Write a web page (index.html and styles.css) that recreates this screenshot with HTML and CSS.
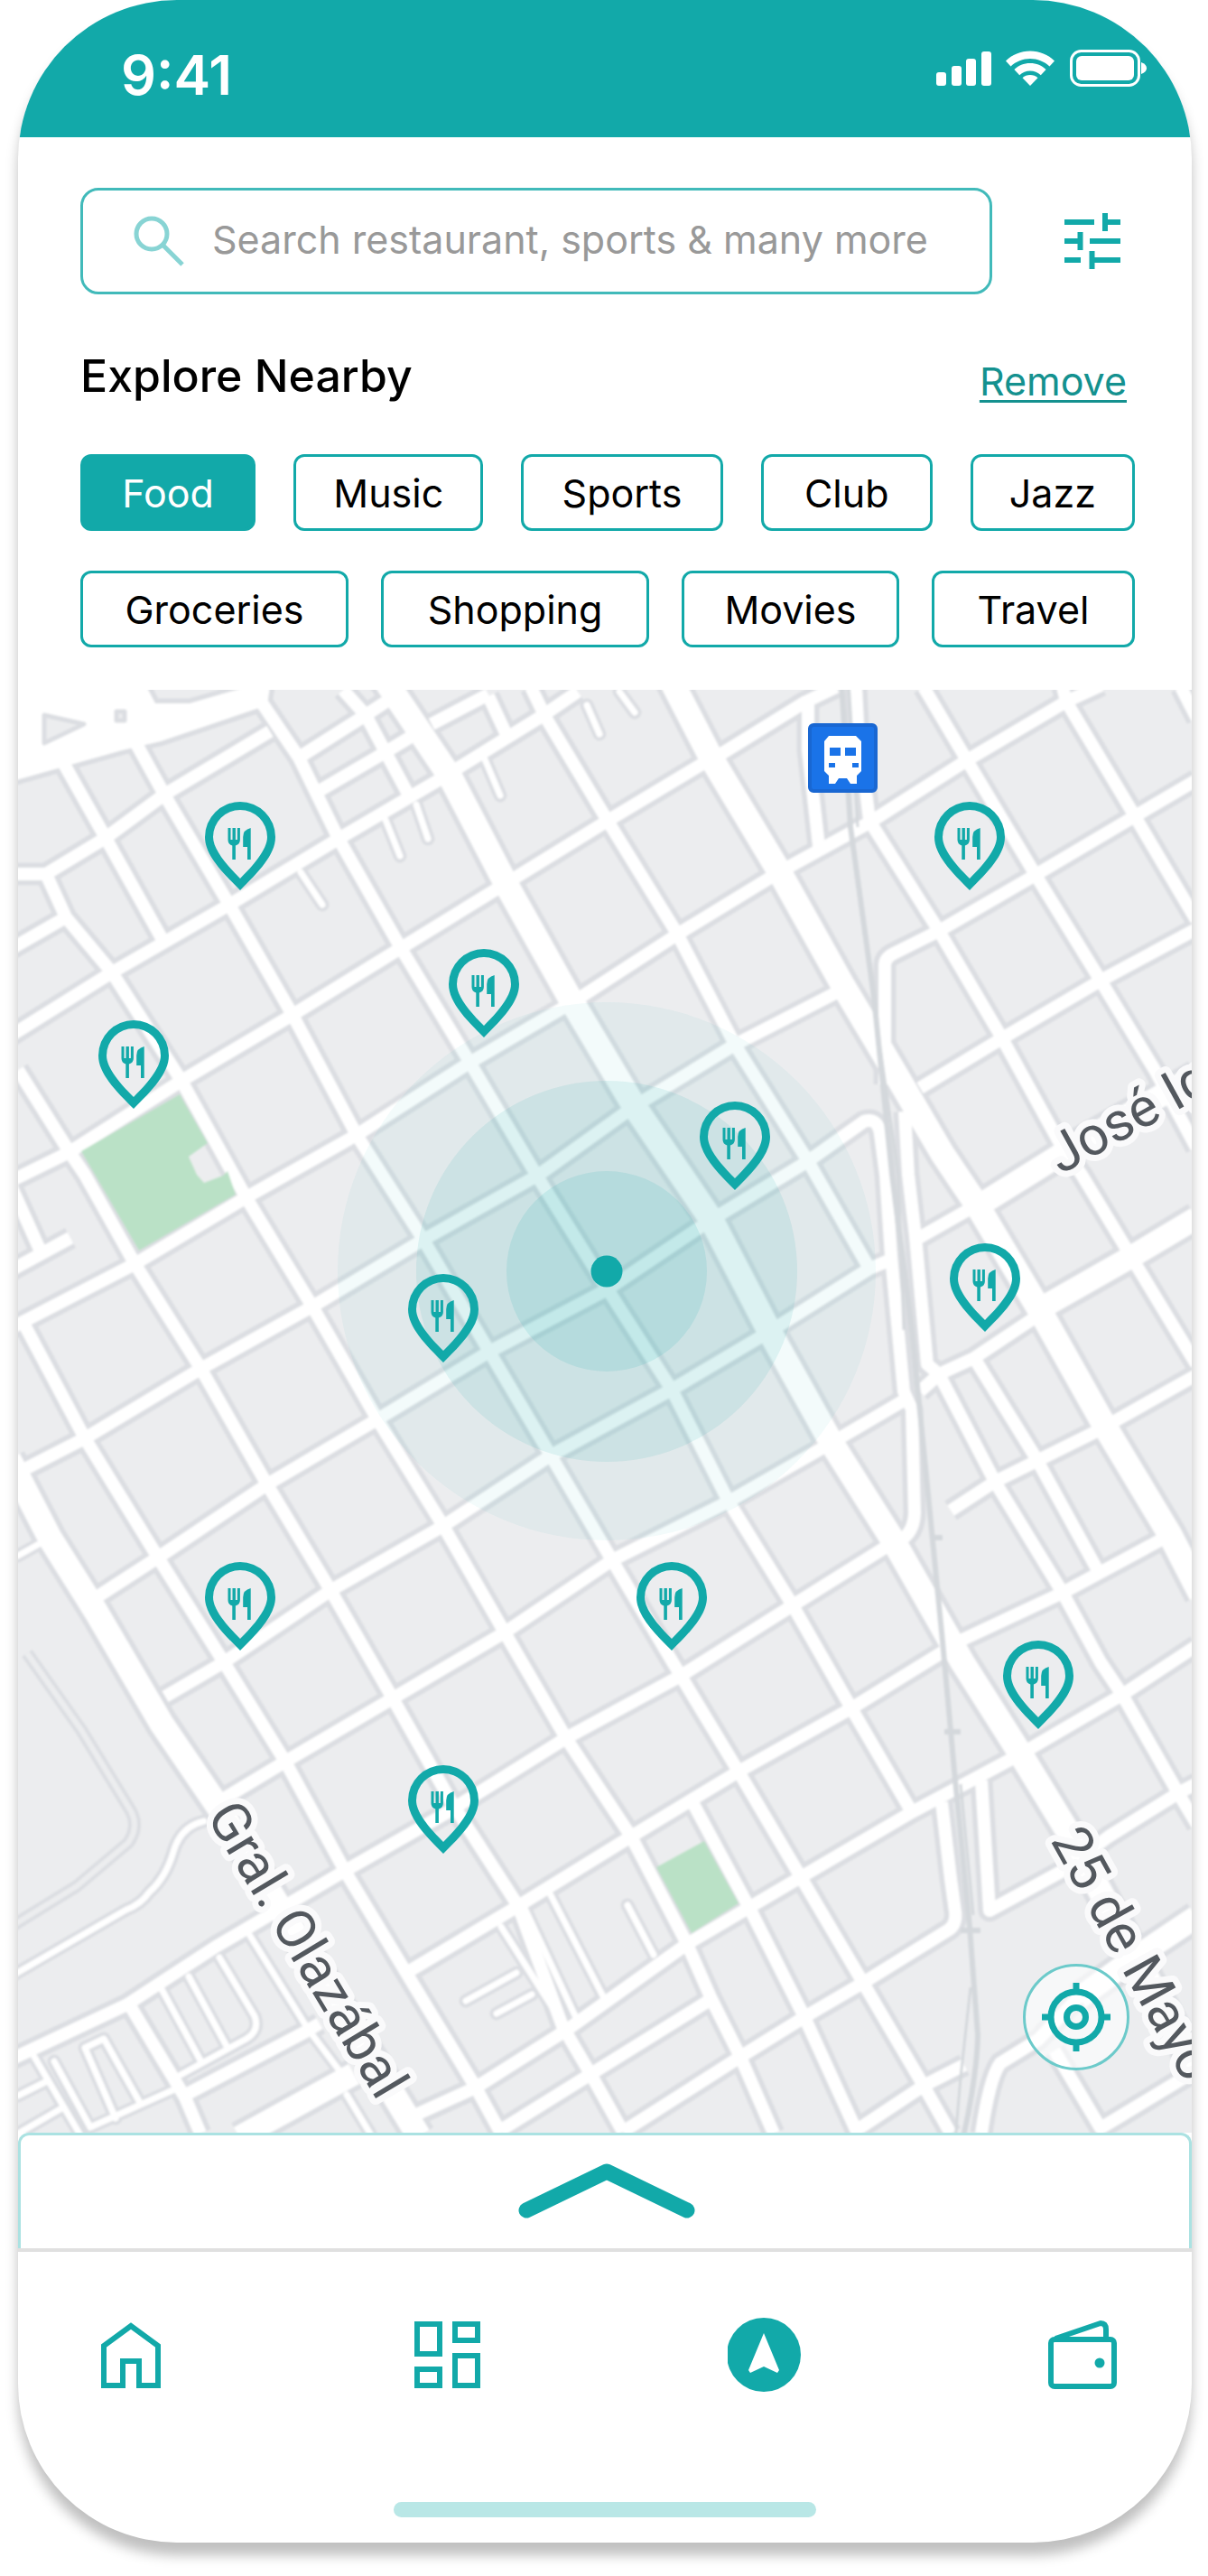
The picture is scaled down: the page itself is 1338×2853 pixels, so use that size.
FILE: index.html
```html
<!DOCTYPE html>
<html lang="en">
<head>
<meta charset="utf-8">
<meta name="viewport" content="width=device-width, initial-scale=1">
<title>Explore Nearby</title>
<link rel="stylesheet" href="styles.css">
</head>
<body>
<main class="phone">
  <header class="status">
    <span class="status-time">9:41</span>
    <svg class="status-icons" viewBox="1036 54 236 44" aria-hidden="true">
      <g fill="#fff">
        <rect x="1037" y="80" width="11" height="15" rx="3"/>
        <rect x="1054" y="73" width="11" height="22" rx="3"/>
        <rect x="1070" y="65" width="11" height="30" rx="3"/>
        <rect x="1087" y="57" width="11" height="38" rx="3"/>
        <path d="M1141 56.500c10.500 0 20 4 27 11l-5.500 6c-6-5.500-13.500-8.500-21.500-8.500s-15.500 3-21.500 8.500l-5.500-6c7-7 16.500-11 27-11z"/>
        <path d="M1141 70c7 0 13 2.600 17.600 7l-5.800 6.200c-3.200-3-7.300-4.700-11.800-4.700s-8.600 1.700-11.800 4.700l-5.800-6.200c4.600-4.400 10.600-7 17.600-7z"/>
        <path d="M1141 83c3.300 0 6.200 1.200 8.500 3.200l-8.500 8.800-8.500-8.800c2.300-2 5.200-3.200 8.500-3.200z"/>
        <rect x="1192" y="62" width="64" height="27" rx="6"/>
        <path d="M1264 69c4 1.500 6 3.700 6 6.500s-2 5-6 6.500z"/>
      </g>
      <rect x="1186.500" y="56.500" width="75" height="38" rx="11" fill="none" stroke="#fff" stroke-width="3"/>
    </svg>
  </header>

  <section class="explore">
    <div class="search-row">
      <label class="search">
        <svg class="search-icon" viewBox="0 0 56 56" aria-hidden="true"><circle cx="20" cy="20" r="17" fill="none" stroke="#88d4d4" stroke-width="5"/><path d="M32 32L54 54" stroke="#88d4d4" stroke-width="5"/></svg>
        <input class="search-input" type="search" aria-label="Search" placeholder="Search restaurant, sports &amp; many more">
      </label>
      <button class="filter" type="button" aria-label="Filters">
        <svg viewBox="1176 234 66 66" fill="none" stroke="#12a9a9" stroke-width="6"><path d="M1178 246h33M1223 246h17M1223 236v20M1178 267h18M1206 267h34M1195.500 257v20M1178 288h18M1208 288h32M1208.500 278v20"/></svg>
      </button>
    </div>
    <div class="title-row">
      <h1 class="title">Explore Nearby</h1>
      <a class="remove" href="#">Remove</a>
    </div>
    <div class="chips chips-five">
      <button class="chip chip-active" type="button">Food</button>
      <button class="chip" type="button">Music</button>
      <button class="chip" type="button">Sports</button>
      <button class="chip" type="button">Club</button>
      <button class="chip" type="button">Jazz</button>
    </div>
    <div class="chips chips-four">
      <button class="chip" type="button">Groceries</button>
      <button class="chip" type="button">Shopping</button>
      <button class="chip" type="button">Movies</button>
      <button class="chip" type="button">Travel</button>
    </div>
  </section>

  <section class="map" aria-label="Map">
    <svg class="map-canvas" viewBox="20 763 1300 1598">
      <defs>
        <g id="streets">
          <path d="M20 1184L77 1275 94 1300 149 1398 222 1514 294 1640 366 1760 435 1880 500 1995 574 2110 623 2243 657 2301 690 2360"/>
          <path d="M51 967L73 1015 124 1076 201 1196 273 1326 346 1446 418 1571 491 1689 559 1807 627 1924 699 2033 761 2152 788 2213 820 2277 857 2362"/>
          <path d="M68 840L117 927 179 1038"/>
          <path d="M145 812L182 879 254 1001 324 1123 395 1256 469 1372 542 1496 610 1611 678 1727 754 1855 818 1961 887 2078 956 2195 1023 2309 1053 2362"/>
          <path d="M285 770L331 838 375 928 444 1049 520 1175 594 1300 673 1427 744 1538 807 1662 878 1777 943 1891 1010 2006"/>
          <path d="M380 763L405 791 427 832 455 884"/>
          <path d="M541 770L562 815M588 760L604 793 673 908 750 1033 814 1156 895 1285 963 1404"/>
          <path d="M895 770V830L908 945M948 760L950 800 963 908 1040 1030 1110 1149 1177 1271 1198 1300 1253 1391 1325 1510"/>
          <path d="M1023 760L1071 841 1147 968 1219 1085 1279 1184 1325 1270M1177 760L1181 776 1257 903 1325 1018M1308 760L1326 795"/>
          <path d="M1040 1521L1102 1640 1177 1763 1219 1840 1243 1876 1305 1985 1326 2020M1079 1503L1147 1613 1219 1744"/>
          <path d="M28 1468L94 1592 175 1724 248 1840 316 1950 382 2071 450 2184 527 2311 555 2362"/>
          <path d="M12 1470L149 1399 273 1325 395 1256 520 1176 636 1108 750 1034 863 965 963 910 1071 841 1181 776 1220 758"/>
          <path d="M12 1634L94 1592 224 1514 346 1446 469 1372 597 1300 703 1224 814 1156 925 1099"/>
          <path d="M107 1768L175 1724 296 1643 418 1571 542 1496 673 1427 783 1353 895 1285 957 1241Q972 1236 975 1255L981 1300 987 1390 1001 1540 1010 1560 1013 1675Q1012 1698 995 1706"/>
          <path d="M183 1878L248 1840 367 1760 491 1689 610 1611 744 1538 852 1474 963 1404 987 1394M1016 1371L1074 1338"/>
          <path d="M243 1994L316 1950 435 1880 559 1807 678 1727 807 1662 921 1597 1008 1546M1019 1540L1040 1521 1079 1503 1151 1455"/>
          <path d="M12 2280L141 2219 239 2155 307 2115 382 2071 491 2009 627 1924 754 1855 878 1777 985 1710"/>
          <path d="M450 2184L574 2110 699 2033 818 1961 943 1891 1050 1825"/>
          <path d="M461 2341L527 2311 628 2247 761 2152 887 2078 1010 2006 1130 1942 1243 1876 1325 1822"/>
          <path d="M555 2358L669 2287 788 2213M690 2360L820 2277 891 2233 956 2195 1048 2138Q1060 2132 1058 2116L1053 2080 1043 1995"/>
          <path d="M946 2360L1023 2309 1068 2286M767 1995L831 2114 891 2233 950 2362"/>
          <path d="M1087 1971L1096 2115 1177 2071 1228 2033 1305 1985 1326 1974"/>
          <path d="M1200 2205L1150 2258 1108 2284Q1096 2300 1087 2362M1168 2270L1219 2356 1325 2292"/>
          <path d="M1224 1579L1325 1522M1053 1672L1102 1640 1219 1582M1066 1815L1177 1763 1294 1700"/>
          <path d="M788 839L673 908 561 977 444 1049 324 1123 201 1196 77 1275 12 1307M794 837L891 777 926 760"/>
          <path d="M12 1146L124 1076 254 1001 375 928 484 864 602 791 640 765"/>
          <path d="M12 967H51L117 927 182 879 299 809M331 838L405 791 440 768M350 877L427 832 460 812M478 801L541 768M12 1050L73 1015"/>
          <path d="M980 1200V1068Q980 1060 990 1055L1040 1030 1147 968 1257 903 1325 863M1019 1204L1110 1149 1219 1085 1325 1028M1002 1230L1006 1300 1014 1369 1027 1510 1040 1521"/>
          <path d="M12 1312L45 1385M12 1406L78 1370M200 2322L337 2250 354 2240M145 2222L205 2322 222 2362"/>
        </g>
        <g id="lanes">
          <path d="M427 907L443 947M461 890L474 928M537 840L554 880M333 965L357 1001M650 780L664 812M686 765L703 788"/>
          <path d="M226 2016Q200 2022 192 2050T165 2095Q156 2108 140 2114L12 2188"/>
          <path d="M243 2167L282 2232Q288 2248 273 2257L200 2297M209 2188L252 2267M179 2202L222 2281M38 2277L88 2362M60 2282L100 2355M94 2267L115 2257 154 2326M94 2267L128 2345M20 2362L70 2333M100 2355L200 2310M20 2320L50 2305M277 2143L341 2246 375 2291M384 2319L410 2362"/>
          <path d="M555 2133L627 2246M580 2110L640 2238M610 2098L669 2212M516 2215L572 2184M550 2229L589 2208M695 2109L724 2164M20 1722L45 1708"/>
        </g>
        <g id="avenues">
          <path d="M425 750L499 860 561 979 631 1104 703 1225 788 1350 852 1473 921 1597 991 1708 1066 1840 1130 1941 1183 2028 1325 2290"/>
          <path d="M742 750L788 839 863 964 934 1091 993 1190 1044 1277 1083 1335 1151 1449 1224 1579 1296 1699 1330 1765"/>
          <path d="M10 1615L55 1702 107 1785 179 1908 245 2005 345 2170 464 2365"/>
        </g>
        <g id="boulevards">
          <path d="M1083 1335L1200 1262 1325 1190M1151 1449L1253 1391 1325 1348M265 2366L392 2296M1325 2122L1250 2172 1195 2212"/>
        </g>
        <path id="junction" d="M0 740H152L172 778H210L300 752 296 780 178 820 135 830 0 868z"/>
        <g id="pin" fill="#12a9a9">
          <path fill-rule="evenodd" d="M0 0C-20-20-39-39-39-59A39 39 0 0 1 39-59C39-39 20-20 0 0zM0-13C14-27 30-45 30-59A30 30 0 0 0-30-59C-30-45-14-27 0-13z"/>
          <path d="M-13.500-69h3v13h2v-13h3.400v13h2v-13h3v13q0 5-5 6.500V-34h-3.600v-15.500q-4.800-1.500-4.800-6.500zM11.700-69V-34H8V-48H3.200v-11q0-8 8.500-10z"/>
        </g>
        <filter id="soften" x="0" y="0" width="1" height="1"><feGaussianBlur stdDeviation="1.300"/></filter>
      </defs>
      <rect x="20" y="763" width="1300" height="1598" fill="#ecedef"/>
      <g filter="url(#soften)" fill="none" stroke-linejoin="round">
        <rect x="20" y="763" width="1300" height="1598" fill="#ecedef"/>
        <g stroke="#dcdee2">
          <use href="#lanes" stroke-width="15" stroke-linecap="round"/>
          <use href="#streets" stroke-width="25"/>
          <use href="#boulevards" stroke-width="36"/>
          <use href="#avenues" stroke-width="38"/>
          <use href="#junction" stroke-width="11"/>
          <path stroke-width="14" d="M30 1830L90 1915 142 2000Q156 2020 142 2040L85 2088 12 2133"/>
        </g>
        <g stroke="#fff">
          <use href="#lanes" stroke-width="7" stroke-linecap="round"/>
          <use href="#streets" stroke-width="14"/>
          <use href="#boulevards" stroke-width="25"/>
          <use href="#avenues" stroke-width="27"/>
        </g>
        <use href="#junction" fill="#fff"/>
        <path stroke="#ecedef" stroke-width="6" d="M30 1830L90 1915 142 2000Q156 2020 142 2040L85 2088 12 2133"/>
        <path fill="#ecedef" stroke="#dcdee2" stroke-width="5" d="M49 791L93 801 49 822zM129 787h9v10h-9z"/>
        <g stroke="#d4d8dc">
          <path stroke-width="6" d="M932 755L942 915 968 1104 988 1300 1010 1472 1027 1644 1044 1817 1057 1960 1074 2133 1083 2253Q1082 2300 1066 2370M1046 1917h18M1030 1702h14M1064 2137h22"/>
          <path stroke-width="3" d="M940 755L950 915M975 1160L995 1300 1001 1472M1064 1975L1078 2120M1075 2200L1064 2300 1058 2370"/>
        </g>
        <path fill="#bae1c6" d="M90 1274L199 1211 230 1265 209 1280 218 1300 226 1309 247 1301 252 1296 261 1322 154 1384z"/>
        <path fill="#bae1c6" d="M727 2067L780 2038 818 2107 766 2140z"/>
      </g>
      <g class="road-names">
        <text transform="translate(1175 1300) rotate(-29)">José Ignacio</text>
        <text transform="translate(228 2010) rotate(59)">Gral. Olazábal</text>
        <text transform="translate(1163 2037) rotate(61)">25 de Mayo</text>
      </g>
      <g>
        <rect x="897" y="802" width="73" height="73" rx="4" fill="#1a73e8" stroke="#1967d2" stroke-width="4"/>
        <path fill="#fff" d="M918 814h30l6 6v33l-5 5v9h-7l-4-6h-9l-4 6h-7v-9l-5-5v-33z"/>
        <path fill="#1a73e8" d="M919 827h12v9h-12zM936 827h12v9h-12zM918 844h7v5h-7zM944 844h7v5h-7z"/>
      </g>
      <g fill="#12a9a9">
        <circle cx="672" cy="1407" r="298" fill-opacity=".05"/>
        <circle cx="672" cy="1407" r="211" fill-opacity=".1"/>
        <circle cx="672" cy="1407" r="111" fill-opacity=".12"/>
        <circle cx="672" cy="1407" r="17.500"/>
      </g>
      <use href="#pin" x="266" y="985"/>
      <use href="#pin" x="1074" y="985"/>
      <use href="#pin" x="536" y="1148"/>
      <use href="#pin" x="148" y="1227"/>
      <use href="#pin" x="814" y="1317"/>
      <use href="#pin" x="1091" y="1474"/>
      <use href="#pin" x="491" y="1508"/>
      <use href="#pin" x="266" y="1827"/>
      <use href="#pin" x="744" y="1827"/>
      <use href="#pin" x="1150" y="1914"/>
      <use href="#pin" x="491" y="2052"/>
    </svg>
    <button class="locate" type="button" aria-label="My location">
      <svg viewBox="-39 -39 78 78" fill="none" stroke="#12a9a9"><circle r="28" stroke-width="7"/><circle r="10.500" stroke-width="7"/><path stroke-width="7" d="M0-38v10M0 28v10M-38 0h10M28 0h10"/></svg>
    </button>
  </section>

  <button class="sheet" type="button" aria-label="Show results">
    <svg viewBox="0 0 196 61" fill="none" stroke="#12a9a9" stroke-width="17" stroke-linecap="round" stroke-linejoin="round"><path d="M9 52L98 9 187 52"/></svg>
  </button>

  <nav class="tabs">
    <a class="tab" href="#" aria-label="Home"><svg viewBox="103 2565 84 84" fill="none" stroke="#12a9a9" stroke-width="6"><path d="M115 2641v-44l30-22 30 22v44h-21v-27h-18v27z"/></svg></a>
    <a class="tab" href="#" aria-label="Dashboard"><svg viewBox="453 2565 84 84" fill="none" stroke="#12a9a9" stroke-width="6"><path d="M461 2573h25v33h-25zM503 2573h25v18h-25zM461 2623h25v18h-25zM503 2608h25v33h-25z"/></svg></a>
    <a class="tab" href="#" aria-label="Explore"><svg viewBox="805 2565 84 84"><circle cx="845" cy="2607" r="41" fill="#12a9a9"/><path fill="#fff" d="M845 2583l17 41-2 3-15-7-15 7-2-3z"/></svg></a>
    <a class="tab" href="#" aria-label="Wallet"><svg viewBox="1157 2565 84 84" fill="none" stroke="#12a9a9" stroke-width="6"><rect x="1164" y="2590" width="70" height="52" rx="4"/><path stroke-linejoin="round" d="M1169 2589l50-17q6 0 6 7v10"/><circle cx="1218" cy="2616" r="5.500" fill="#12a9a9" stroke="none"/></svg></a>
  </nav>
  <div class="home-bar"></div>
</main>
</body>
</html>
```
FILE: styles.css
```css
* {
  box-sizing: border-box;
}

body {
  margin: 0;
  padding: 0 18px 38px 20px;
  background: #fff;
  font-family: "Inter", sans-serif;
  color: #000;
}

button {
  margin: 0;
  padding: 0;
  border: 0;
  background: none;
  font: inherit;
  color: inherit;
}

svg {
  display: block;
}

.phone {
  display: flex;
  flex-direction: column;
  overflow: hidden;
  border-radius: 176px;
  background: #fff;
  box-shadow: 0 14px 14px rgba(0, 0, 0, 0.25);
}

.status {
  display: flex;
  justify-content: space-between;
  align-items: flex-start;
  padding: 54px 48px 40px 114px;
  background: #12a9a9;
  color: #fff;
}

.status-time {
  font-size: 61px;
  line-height: 58px;
  font-weight: 600;
}

.status-icons {
  width: 236px;
  height: 44px;
}

.explore {
  padding: 56px 63px 47px 69px;
}

.search-row {
  display: flex;
  align-items: center;
  justify-content: space-between;
  padding-right: 14px;
}

.search {
  display: flex;
  align-items: center;
  flex: 1;
  gap: 31px;
  height: 118px;
  margin-right: 78px;
  padding: 0 20px 0 56px;
  border: 3px solid #41baba;
  border-radius: 20px;
}

.search-icon {
  flex: none;
  width: 56px;
  height: 56px;
}

.search-input {
  flex: 1;
  min-width: 0;
  padding: 0 0 4px;
  border: 0;
  outline: 0;
  background: none;
  font: inherit;
  font-size: 43px;
}

.search-input::placeholder {
  color: #999;
  opacity: 1;
}

.filter svg {
  width: 66px;
  height: 66px;
}

.title-row {
  display: flex;
  align-items: flex-start;
  justify-content: space-between;
  margin: 58px 9px 43px 0;
}

.title {
  margin: 0;
  font-size: 50px;
  line-height: 64px;
  font-weight: 500;
}

.remove {
  color: #14918f;
  font-size: 43px;
  line-height: 76px;
  text-decoration-thickness: 3px;
  text-underline-offset: 5px;
}

.chips {
  display: grid;
}

.chips-five {
  grid-template-columns: 194fr 210fr 223fr 190fr 182fr;
  gap: 42px;
  margin-bottom: 44px;
}

.chips-four {
  grid-template-columns: 297fr 297fr 241fr 225fr;
  gap: 36px;
}

.chip {
  height: 85px;
  border: 3px solid #12a9a9;
  border-radius: 12px;
  font-size: 43px;
  line-height: 60px;
}

.chip-active {
  background: #12a9a9;
  color: #fff;
}

.map {
  position: relative;
}

.map-canvas {
  width: 100%;
  height: auto;
}

.road-names {
  font-family: "Roboto", sans-serif;
  font-size: 60px;
  fill: #53585e;
  stroke: #fafafb;
  stroke-width: 14px;
  stroke-linejoin: round;
  paint-order: stroke;
}

.locate {
  position: absolute;
  right: 69px;
  bottom: 69px;
  display: grid;
  place-items: center;
  width: 118px;
  height: 118px;
  border: 3px solid #6ccaca;
  border-radius: 50%;
  background: rgba(255, 255, 255, 0.6);
}

.locate svg {
  width: 78px;
  height: 78px;
}

.sheet {
  display: flex;
  justify-content: center;
  padding: 31px 0 31px 4px;
  height: 128px;
  border: 3px solid #abe2e2;
  border-bottom: 0;
  border-radius: 12px 12px 0 0;
  background: #fff;
}

.sheet svg {
  width: 196px;
  height: 61px;
}

.tabs {
  display: flex;
  justify-content: space-between;
  padding: 72px 79px 0 83px;
  border-top: 4px solid #e0e0e0;
}

.tab svg {
  width: 84px;
  height: 84px;
}

.home-bar {
  width: 36%;
  height: 17px;
  margin: 121px auto 28px;
  border-radius: 9px;
  background: #b9e7e6;
}
```
